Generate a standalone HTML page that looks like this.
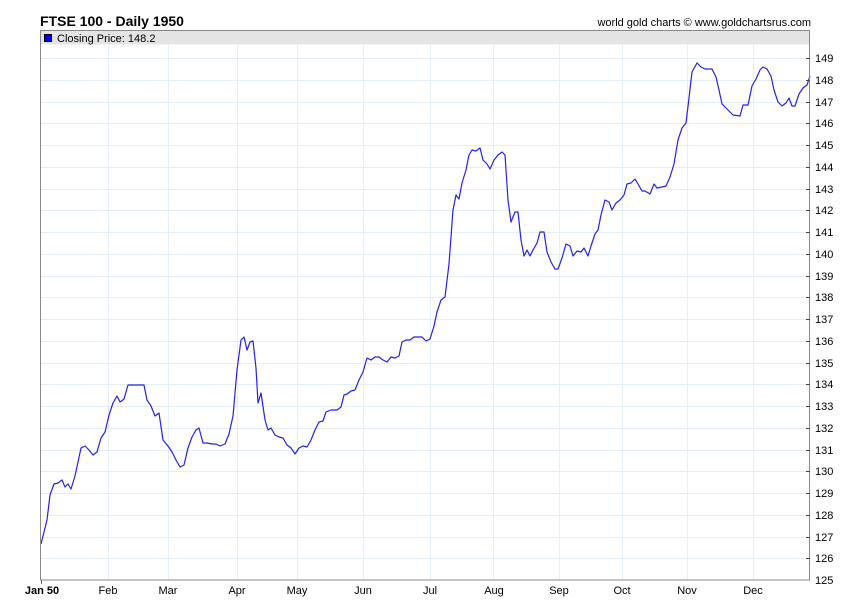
<!DOCTYPE html>
<html><head><meta charset="utf-8"><style>
html,body{margin:0;padding:0;background:#fff;width:850px;height:616px;overflow:hidden}
svg{display:block}
text{font-family:"Liberation Sans",Arial,sans-serif}
</style></head><body>
<svg width="850" height="616" viewBox="0 0 850 616">
<text x="40" y="26" font-size="14" font-weight="bold" fill="#000">FTSE 100 - Daily 1950</text>
<text x="811" y="26" font-size="11" fill="#000" text-anchor="end">world gold charts © www.goldchartsrus.com</text>
<g stroke="#e2eef8" stroke-width="1">
<line x1="108.5" y1="30" x2="108.5" y2="580"/><line x1="168.5" y1="30" x2="168.5" y2="580"/>
<line x1="237.5" y1="30" x2="237.5" y2="580"/><line x1="297.5" y1="30" x2="297.5" y2="580"/>
<line x1="363.5" y1="30" x2="363.5" y2="580"/><line x1="430.5" y1="30" x2="430.5" y2="580"/>
<line x1="493.5" y1="30" x2="493.5" y2="580"/><line x1="559.5" y1="30" x2="559.5" y2="580"/>
<line x1="622.5" y1="30" x2="622.5" y2="580"/><line x1="687.5" y1="30" x2="687.5" y2="580"/>
<line x1="753.5" y1="30" x2="753.5" y2="580"/>
</g>
<g id="hg" stroke="#e2eef8" stroke-width="1"></g>
<rect x="40.5" y="30.5" width="769" height="14" fill="#e4e4e4"/>
<rect x="44.5" y="34.5" width="7" height="7" fill="#0000ff" stroke="#000" stroke-width="1"/>
<text x="57" y="42" font-size="11" fill="#000">Closing Price: 148.2</text>
<polyline fill="none" stroke="#2222ee" stroke-width="1.2" stroke-linejoin="round" points="41,544 47,520 50,495 54,484 58,483 62,480 65,487 68,484 71,489 75,476 78,462 81,448 85,446 89,450 93,455 97,452 101,438 105,432 109,415 113,403 117,396 120,402 124,399 128,385 136,385 144,385 147,400 151,406 155,416 159,413 163,440 168,446 172,452 176,460 180,467 184,465 188,448 192,437 196,430 199,428 203,443 207,443 212,444 216,444 220,446 225,444 229,434 233,416 237,370 241,340 244,337 247,350 250,342 253,341 256,368 258,403 261,393 265,420 268,430 271,428 275,435 279,437 283,438 287,445 291,448 295,454 299,448 303,446 307,447 311,440 315,430 319,422 323,421 326,412 331,410 337,410 341,407 344,395 347,394 351,391 355,390 359,380 363,372 367,358 371,360 375,357 379,357 383,360 387,362 391,357 395,358 399,356 402,342 406,340 410,340 414,337 422,337 426,341 430,339 434,326 437,312 441,300 445,297 449,264 453,210 456,195 459,199 462,183 466,170 469,155 472,150 476,151 480,148 483,160 487,164 490,169 494,160 498,155 502,152 505,155 508,200 511,222 515,212 518,212 521,240 524,256 527,250 530,256 533,250 537,243 540,232 544,232 547,252 551,262 555,269 558,269 562,258 566,244 570,246 573,256 577,251 581,252 584,248 588,256 591,246 595,234 598,230 601,215 605,200 609,202 612,210 616,203 620,200 624,195 627,184 631,183 635,179 638,184 642,191 645,191 650,194 654,184 657,188 662,187 666,186 670,177 674,164 678,140 682,128 686,123 689,98 692,72 697,63 701,67 705,69 712,69 716,77 719,90 722,104 728,110 733,115 740,116 743,105 748,105 752,86 756,79 760,70 763,67 767,69 771,76 774,90 778,102 782,106 786,103 789,98 792,106 795,106 799,94 803,88 807,85 810,76"/>
<rect x="40.5" y="30.5" width="769" height="549.5" fill="none" stroke="#888" stroke-width="1"/>
<g id="yl" font-size="11" fill="#000"></g>
<g font-size="11" fill="#000" text-anchor="middle">
<text x="42" y="594" font-weight="bold">Jan 50</text><text x="108" y="594">Feb</text><text x="168" y="594">Mar</text>
<text x="237" y="594">Apr</text><text x="297" y="594">May</text><text x="363" y="594">Jun</text>
<text x="430" y="594">Jul</text><text x="494" y="594">Aug</text><text x="559" y="594">Sep</text>
<text x="622" y="594">Oct</text><text x="687" y="594">Nov</text><text x="753" y="594">Dec</text>
</g>
<g stroke="#666"><line x1="41.5" y1="580" x2="41.5" y2="584"/></g>
<g id="yticks" font-size="11" fill="#000">
<text x="815" y="62">149</text><text x="815" y="84">148</text><text x="815" y="106">147</text><text x="815" y="127">146</text>
<text x="815" y="149">145</text><text x="815" y="171">144</text><text x="815" y="193">143</text><text x="815" y="214">142</text>
<text x="815" y="236">141</text><text x="815" y="258">140</text><text x="815" y="280">139</text><text x="815" y="301">138</text>
<text x="815" y="323">137</text><text x="815" y="345">136</text><text x="815" y="367">135</text><text x="815" y="388">134</text>
<text x="815" y="410">133</text><text x="815" y="432">132</text><text x="815" y="454">131</text><text x="815" y="475">130</text>
<text x="815" y="497">129</text><text x="815" y="519">128</text><text x="815" y="541">127</text><text x="815" y="562">126</text>
<text x="815" y="584">125</text>
</g>
</svg>
<script>
var hg=document.getElementById('hg'),ns='http://www.w3.org/2000/svg';
var tk=document.querySelector('svg');
for(var v=126;v<=149;v++){var y=Math.round(580-(v-125)*21.75)+0.5;
var l=document.createElementNS(ns,'line');l.setAttribute('x1',41);l.setAttribute('x2',809);l.setAttribute('y1',y);l.setAttribute('y2',y);hg.appendChild(l);
var t=document.createElementNS(ns,'line');t.setAttribute('x1',806);t.setAttribute('x2',810);t.setAttribute('y1',y);t.setAttribute('y2',y);t.setAttribute('stroke','#444');tk.appendChild(t);}
</script>
</body></html>
